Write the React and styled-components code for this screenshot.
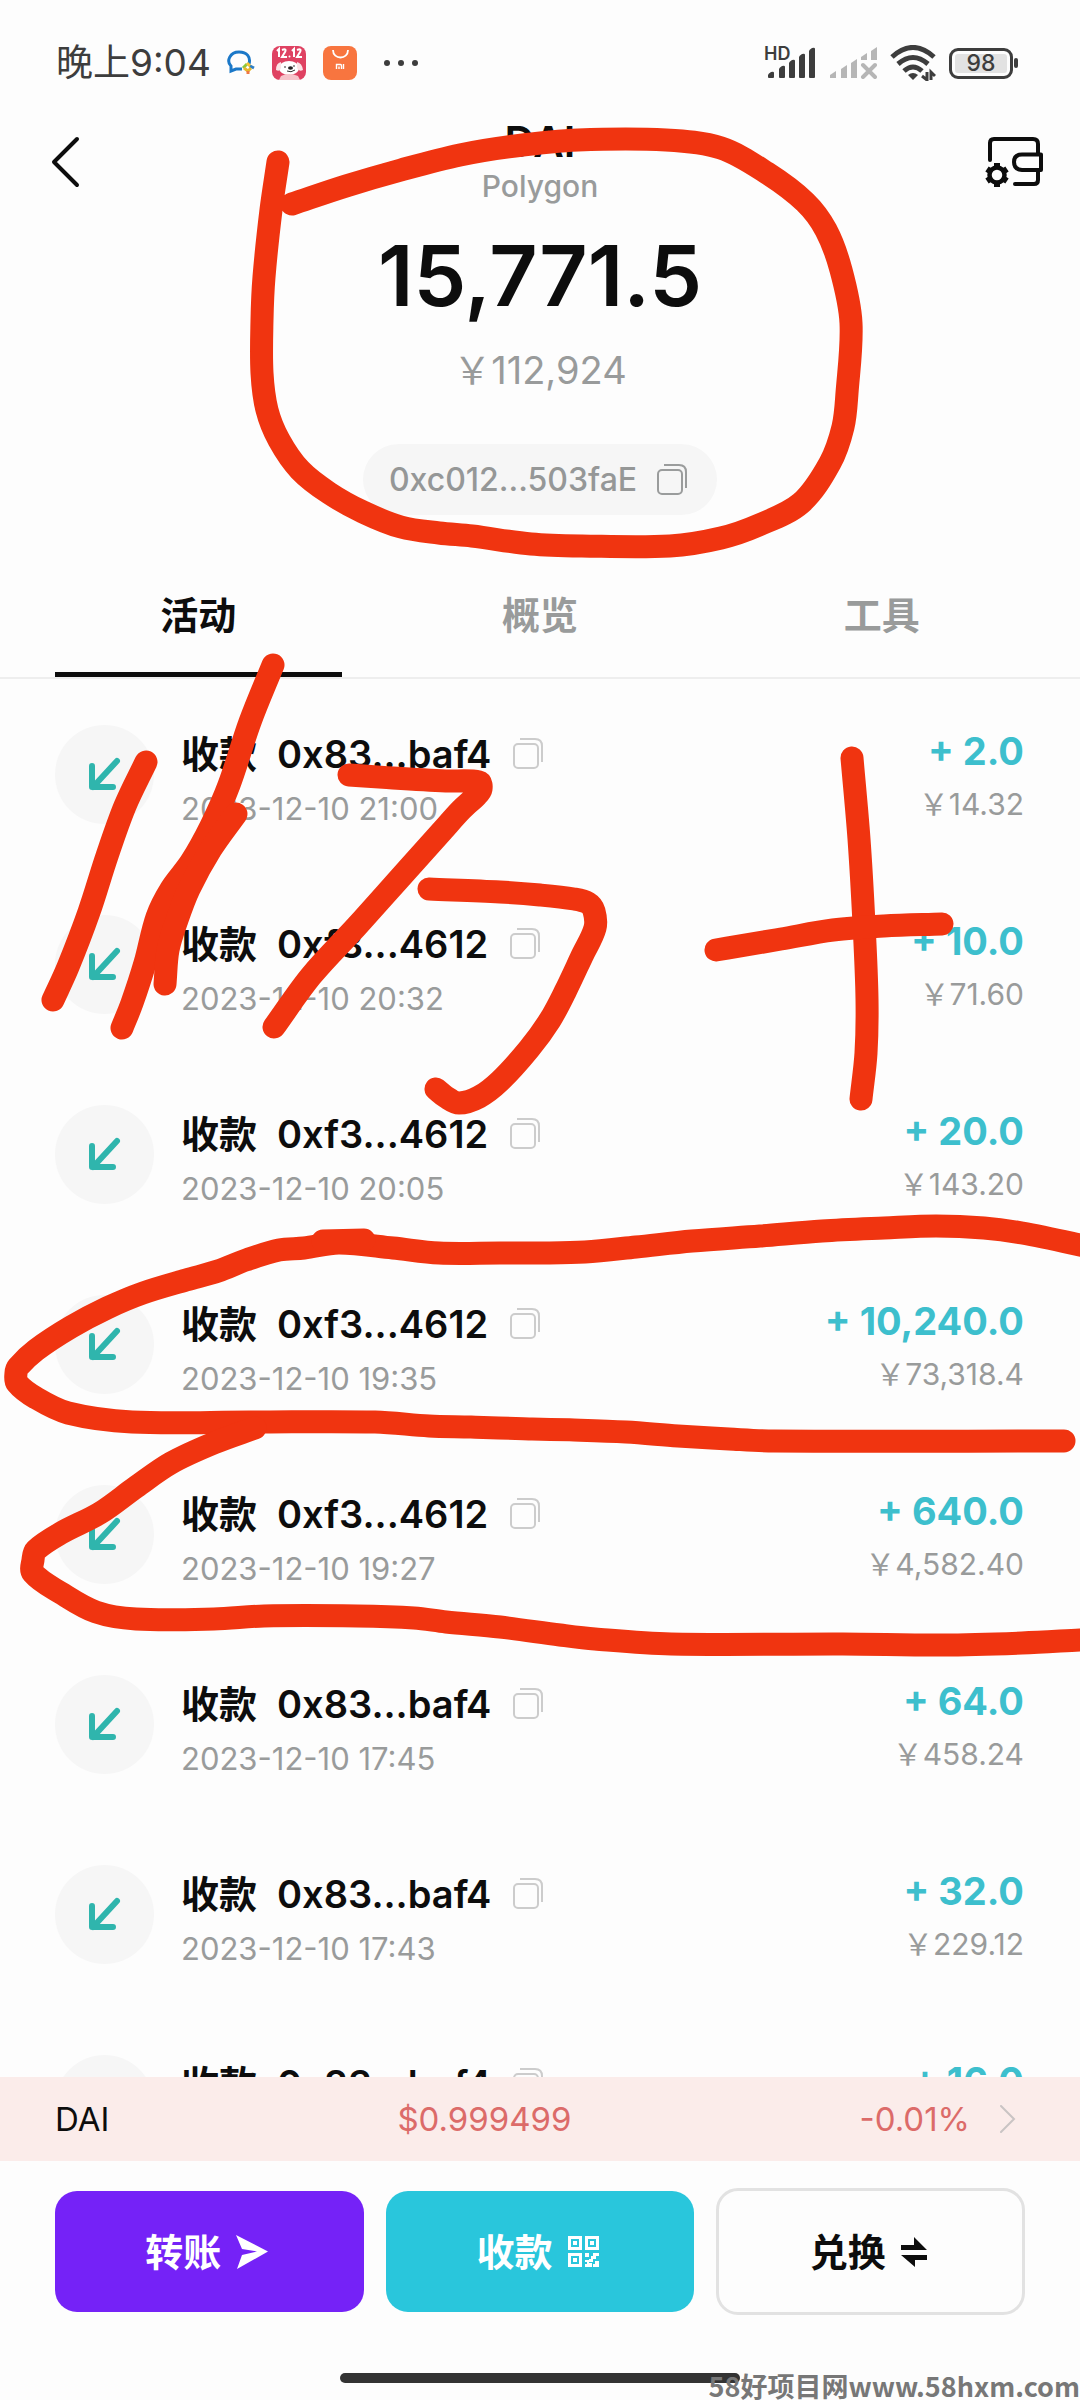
import React from "react";
import styled, { createGlobalStyle } from "styled-components";

const GlobalStyle = createGlobalStyle`
  *, *::before, *::after { box-sizing: border-box; }
  html, body { margin: 0; background: #fdfdfd; }
  body, button {
    font-family: Inter, "Noto Sans CJK SC", "Liberation Sans", sans-serif;
  }
  button { margin: 0; padding: 0; border: 0; background: none; color: inherit; cursor: pointer; }
  svg { display: block; flex: none; }
`;

const Page = styled.div`
  position: relative;
  display: flex;
  flex-direction: column;
  height: 100vh;
  overflow: hidden;
  background: #fdfdfd;
  color: #0d0d0d;
`;

const StatusBar = styled.div`
  display: flex;
  align-items: center;
  justify-content: space-between;
  flex: none;
  height: 118px;
  padding: 8px 62px 0 56px;
  color: #3d3d3d;
`;

const StatusGroup = styled.div`
  display: flex;
  align-items: center;
  gap: ${(p) => p.$gap}px;
`;

const Clock = styled.time`
  font-size: 37px;
  line-height: 44px;
`;

const NotificationIcons = styled.div`
  display: flex;
  align-items: center;
  gap: 17px;
  margin-right: 10px;
`;

const SignalBox = styled.span`
  position: relative;
  display: block;
`;

const HdMark = styled.span`
  position: absolute;
  left: -2px;
  top: -2px;
  font-size: 18px;
  line-height: 18px;
  font-weight: 600;
`;

const BatteryBox = styled.span`
  display: flex;
  align-items: center;
  gap: 1px;
`;

const BatteryLevel = styled.span`
  display: flex;
  align-items: center;
  justify-content: center;
  width: 64px;
  height: 31px;
  border: 3px solid #3d3d3d;
  border-radius: 9px;
  background: #e2e2e2;
  box-shadow: inset 0 0 0 3px #fdfdfd;
  font-size: 23px;
  line-height: 24px;
  font-weight: 500;
`;

const BatteryTip = styled.span`
  width: 4px;
  height: 10px;
  border-radius: 2px;
  background: #3d3d3d;
`;

const Header = styled.header`
  display: flex;
  align-items: center;
  justify-content: space-between;
  flex: none;
  height: 88px;
  padding: 0 36px;
`;

const IconButton = styled.button`
  display: flex;
  align-items: center;
  justify-content: center;
  width: 60px;
  height: 60px;
`;

const HeaderTitle = styled.div`
  text-align: center;
`;

const TokenName = styled.h1`
  margin: 0;
  font-size: 42px;
  line-height: 48px;
  font-weight: 600;
`;

const Network = styled.div`
  font-size: 30px;
  line-height: 40px;
  font-weight: 500;
  color: #999b9b;
`;

const Summary = styled.section`
  display: flex;
  flex-direction: column;
  align-items: center;
  flex: none;
  padding-top: 20px;
`;

const Balance = styled.div`
  font-size: 84px;
  line-height: 100px;
  font-weight: 600;
`;

const BalanceFiat = styled.div`
  margin-top: 20px;
  font-size: 38px;
  line-height: 48px;
  color: #999b9b;
`;

const AddressPill = styled.button`
  display: flex;
  align-items: center;
  gap: 20px;
  height: 71px;
  margin-top: 50px;
  padding: 0 30px 0 26px;
  border-radius: 36px;
  background: #f6f6f6;
  font-size: 32px;
  line-height: 40px;
  font-weight: 500;
  color: #959797;
`;

const Tabs = styled.div`
  display: grid;
  grid-template-columns: repeat(3, 1fr);
  gap: 55px;
  flex: none;
  margin-top: 42px;
  padding: 0 55px;
  border-bottom: 2px solid #eeeeee;
`;

const Tab = styled.button`
  height: 120px;
  border-bottom: 5px solid ${(p) => (p.$active ? "#0d0d0d" : "transparent")};
  font-size: 38px;
  line-height: 48px;
  font-weight: 600;
  color: ${(p) => (p.$active ? "#0d0d0d" : "#999b9b")};
`;

const List = styled.ul`
  flex: 1;
  min-height: 0;
  margin: 0;
  padding: 0;
  overflow: hidden;
  list-style: none;
`;

const Row = styled.li`
  display: flex;
  align-items: center;
  height: 190px;
  padding: 0 56px 0 55px;
`;

const Direction = styled.span`
  display: flex;
  align-items: center;
  justify-content: center;
  flex: none;
  width: 99px;
  height: 99px;
  margin-right: 27px;
  border-radius: 50%;
  background: #f6f6f6;
`;

const Details = styled.div`
  flex: 1;
  padding-top: 9px;
`;

const TitleLine = styled.div`
  display: flex;
  align-items: center;
  font-size: 38px;
  line-height: 60px;
  font-weight: 600;
`;

const Counterparty = styled.span`
  margin: 0 22px 0 20px;
`;

const CopyButton = styled.button`
  display: flex;
`;

const Time = styled.div`
  font-size: 31px;
  line-height: 50px;
  color: #999b9b;
`;

const Fiat = styled.div`
  font-size: 30px;
  line-height: 46px;
  color: #999b9b;
`;

const Amounts = styled.div`
  text-align: right;
`;

const Amount = styled.div`
  font-size: 38px;
  line-height: 60px;
  font-weight: 700;
  color: #3dbfcd;
`;

const Ticker = styled.button`
  display: flex;
  align-items: center;
  justify-content: space-between;
  flex: none;
  height: 84px;
  padding: 0 64px 0 55px;
  background: #fbecea;
  font-size: 33px;
  line-height: 40px;
  color: #0d0d0d;
`;

const TickerValue = styled.span`
  display: flex;
  align-items: center;
  gap: 30px;
  color: #dc6b69;
`;

const Actions = styled.div`
  display: grid;
  grid-template-columns: repeat(3, 1fr);
  align-items: center;
  gap: 22px;
  flex: none;
  padding: 27px 55px 0;
`;

const ActionButton = styled.button`
  display: flex;
  align-items: center;
  justify-content: center;
  gap: 15px;
  height: ${(p) => (p.$outlined ? 127 : 121)}px;
  padding-right: 5px;
  border: ${(p) => (p.$outlined ? "3px solid #e2e2e2" : "0")};
  border-radius: 22px;
  background: ${(p) => p.$bg};
  color: ${(p) => p.$color};
  font-size: 38px;
  line-height: 48px;
  font-weight: 600;
`;

const HomeBar = styled.div`
  align-self: center;
  flex: none;
  width: 37%;
  height: 10px;
  margin: 58px 0 17px;
  border-radius: 5px;
  background: #333333;
`;

const Watermark = styled.div`
  position: absolute;
  right: 0;
  bottom: 0;
  font-family: "Noto Sans CJK SC", sans-serif;
  font-size: 27px;
  line-height: 28px;
  font-weight: 700;
  white-space: nowrap;
  color: #777777;
`;

const Ink = styled.svg`
  position: absolute;
  left: 0;
  top: 0;
  width: 100%;
  pointer-events: none;
`;

function CopyIcon({ color }) {
  return (
    <svg width="30" height="31" viewBox="0 0 30 31" fill="none" stroke={color} strokeWidth="2">
      <rect x="1" y="6" width="24" height="24" rx="4" />
      <path d="M7 1H22Q29 1 29 8V24" />
    </svg>
  );
}

function ChatIcon() {
  return (
    <svg width="28" height="26" viewBox="0 0 28 26" fill="none" strokeWidth="3">
      <path d="M22 14C24 7 20 2 12 2C3 2 -1 11 4 16L4 21L9 19H15" stroke="#1b78c8" />
      <path d="M16 18L20 14" stroke="#8cc63f" />
      <path d="M20 13L24 17" stroke="#f5c331" />
      <path d="M23 16L27 18" stroke="#2f7fc4" />
      <path d="M17 18L21 21L24 18" stroke="#e7b62e" />
      <path d="M21 21L21 24" stroke="#ee7744" />
    </svg>
  );
}

function ShoppingAppIcon() {
  return (
    <svg width="34" height="34" viewBox="0 0 34 34">
      <rect width="34" height="34" rx="8" fill="#df4262" />
      <path d="M5 5L7 3V11M10 4Q15 2 13 6L10 11H15M20 5L22 3V11M25 4Q30 2 28 6L25 11H30" fill="none" stroke="#fff" strokeWidth="2" />
      <circle cx="17.500" cy="10.500" r="1" fill="#fff" />
      <ellipse cx="17" cy="22" rx="10" ry="7" fill="#fff" />
      <path d="M9 16Q4 17 4 24Q8 26 9 22ZM25 16Q30 17 31 24Q27 26 25 22Z" fill="#fbe3e6" />
      <path d="M9 30Q17 26 26 30L28 34H7Z" fill="#f6c4cb" />
      <ellipse cx="18.500" cy="22" rx="2.500" ry="1.800" fill="#222" />
      <path d="M13 20V22M22 19V21M15 25Q19 27 23 24" stroke="#333" strokeWidth="1" fill="none" />
    </svg>
  );
}

function StoreAppIcon() {
  return (
    <svg width="34" height="34" viewBox="0 0 34 34" fill="none" stroke="#fff">
      <rect width="34" height="34" rx="8" fill="#f8753f" stroke="none" />
      <path d="M10 4C10 14 25 14 25 4" strokeWidth="1.800" />
      <path d="M13.500 23V18.500H17.500Q18.500 18.500 18.500 20V23M16 20.500V23M20.500 18V23" strokeWidth="1.400" />
    </svg>
  );
}

function DotsIcon() {
  return (
    <svg width="36" height="8" viewBox="0 0 36 8" fill="#3d3d3d">
      <circle cx="4" cy="4" r="3" />
      <circle cx="18" cy="4" r="3" />
      <circle cx="32" cy="4" r="3" />
    </svg>
  );
}

const BARS = [
  [2, 24],
  [13, 18],
  [23, 12],
  [33, 6],
  [43, 0],
];

function SignalIcon() {
  return (
    <svg width="49" height="32" viewBox="0 0 49 32" fill="#3d3d3d">
      {BARS.map(([x, y]) => (
        <path key={x} d={`M${x} ${y + 4}Q${x} ${y + 3} ${x + 3} ${y + 1}Q${x + 6} ${y} ${x + 6} ${y + 2}V30Q${x + 6} 31 ${x + 5} 31H${x + 1}Q${x} 31 ${x} 30Z`} />
      ))}
    </svg>
  );
}

function NoSignalIcon() {
  return (
    <svg width="49" height="32" viewBox="0 0 49 32" fill="#b6b6b6">
      {BARS.map(([x, y], i) => {
        const base = i < 3 ? 31 : 13;
        return <path key={x} d={`M${x} ${y + 4}L${x + 6} ${y}V${base}H${x}Z`} />;
      })}
      <path d="M35 18L47 30M47 18L35 30" stroke="#b6b6b6" strokeWidth="4" strokeLinecap="round" />
    </svg>
  );
}

function WifiIcon() {
  return (
    <svg width="46" height="36" viewBox="0 0 46 36" fill="none" stroke="#3d3d3d">
      <path d="M2 12Q23 -7 44 12" strokeWidth="5" />
      <path d="M8 19Q23 6 38 19" strokeWidth="5" />
      <path d="M14 26Q23 18 32 26" strokeWidth="5" />
      <path d="M18 30Q23 26 28 30L23 35Z" fill="#3d3d3d" stroke="none" />
      <path d="M37 27V35L32 31M41 35V27L45 31" strokeWidth="3" />
    </svg>
  );
}

function BackIcon() {
  return (
    <svg width="30" height="52" viewBox="0 0 30 52" fill="none" stroke="#0d0d0d" strokeWidth="4" strokeLinecap="round" strokeLinejoin="round">
      <path d="M26 3L3 26L26 49" />
    </svg>
  );
}

function WalletIcon() {
  return (
    <svg width="60" height="52" viewBox="0 0 60 52" fill="none" stroke="#0d0d0d" strokeWidth="4" strokeLinecap="round" strokeLinejoin="round">
      <path d="M6 24V7Q6 3 10 3H49Q54 3 54 8V17M54 36V44Q54 48 50 48H31" />
      <path d="M57 18.500H38Q30 18.500 30 26T38 34H57Z" />
      <circle cx="13" cy="39" r="7.500" strokeWidth="4.500" />
      <path d="M13 31V27M13 47V51M6 35L3 33M20 43L23 45M6 43L3 45M20 35L23 33" strokeWidth="6" strokeLinecap="butt" />
    </svg>
  );
}

function IncomingIcon() {
  return (
    <svg width="32" height="34" viewBox="0 0 32 34" fill="none" stroke="#2fb5ad" strokeWidth="6" strokeLinecap="round" strokeLinejoin="round">
      <path d="M28 4L4 30M3 9V30H24" />
    </svg>
  );
}

function ChevronIcon() {
  return (
    <svg width="16" height="28" viewBox="0 0 16 28" fill="none" stroke="#c9c4c4" strokeWidth="2" strokeLinecap="round">
      <path d="M1 1L14 14L1 27" />
    </svg>
  );
}

function SendIcon() {
  return (
    <svg width="32" height="34" viewBox="0 0 32 34" fill="#fff">
      <path d="M0 0L32 16.500L1 34L6 20L21 16.500L6 14Z" />
    </svg>
  );
}

function QrIcon() {
  return (
    <svg width="31" height="31" viewBox="0 0 31 31" fill="none" stroke="#fff" strokeWidth="3">
      {[[1.5, 1.5], [18.5, 1.5], [1.5, 18.5]].map(([x, y]) => (
        <g key={`${x}-${y}`}>
          <rect x={x} y={y} width="11" height="11" />
          <rect x={x + 3.5} y={y + 3.5} width="4" height="4" fill="#fff" stroke="none" />
        </g>
      ))}
      <path d="M17 17H21V21H17ZM25 17H31V20H28V23H25V26H21V23H23V20H25ZM17 24H21V27H24V31H17V28H19V26H17ZM27 25H31V31H25V28H27Z" fill="#fff" stroke="none" />
    </svg>
  );
}

function SwapIcon() {
  return (
    <svg width="26" height="30" viewBox="0 0 26 30" fill="#0d0d0d">
      <path d="M0 8H13V0L26 13H0ZM26 23H14V30L0 18H26Z" />
    </svg>
  );
}

const STROKES = [
  [[278,162],[271,210],[264,277],[262,320],[262,373],[267,410],[279,440],[300,470],[329,493],[363,512],[401,527],[439,533],[472,536],[531,544],[582,546],[670,546],[721,538],[759,525],[801,503],[830,463],[843,427],[847,393],[851,323],[841,270],[826,230],[805,202],[767,173],[721,148],[666,140],[578,140],[515,146],[460,155],[401,170],[346,186],[292,204]],
  [[146,762],[125,806],[107,856],[89,912],[68,967],[53,1000]],
  [[273,665],[250,722],[229,785],[211,826],[191,862],[171,889],[157,917],[145,963],[132,1003],[122,1028]],
  [[236,814],[211,849],[189,889],[177,920],[168,950],[165,984]],
  [[349,775],[393,778],[446,781],[479,782],[481,789],[477,795],[461,810],[443,830],[400,878],[357,926],[311,976],[274,1027]],
  [[429,889],[500,892],[540,895],[574,899],[588,903],[594,911],[595,928],[582,956],[565,992],[550,1020],[529,1049],[500,1081],[479,1097],[459,1103],[446,1097],[436,1089]],
  [[852,758],[859,839],[864,924],[867,999],[866,1053],[861,1099]],
  [[716,950],[781,939],[833,930],[884,926],[942,924]],
  [[1100,1250],[1080,1245],[1022,1233],[984,1228],[936,1226],[884,1228],[822,1231],[760,1236],[692,1241],[636,1247],[585,1252],[540,1253],[500,1253],[439,1253],[393,1248],[339,1243],[304,1248],[279,1250],[246,1260],[218,1271],[186,1280],[143,1293],[107,1308],[71,1327],[36,1350],[18,1367],[16,1373],[17,1383],[36,1398],[68,1413],[132,1422],[250,1422],[375,1422],[429,1426],[471,1427],[529,1429],[574,1430],[626,1432],[678,1436],[729,1439],[774,1441],[1064,1441]],
  [[323,1241],[364,1240]],
  [[255,1428],[214,1443],[171,1463],[136,1487],[100,1513],[61,1533],[36,1550],[33,1560],[33,1573],[61,1593],[96,1612],[136,1619],[214,1619],[264,1616],[357,1616],[414,1618],[446,1622],[500,1627],[560,1635],[595,1639],[671,1644],[843,1644],[943,1645],[1022,1643],[1080,1640],[1100,1639]],
];

// Catmull-Rom interpolation: the curve passes through every point.
function smooth(points) {
  const last = points.length - 1;
  let d = `M${points[0][0]} ${points[0][1]}`;
  for (let i = 0; i < last; i += 1) {
    const p0 = points[Math.max(i - 1, 0)];
    const p1 = points[i];
    const p2 = points[i + 1];
    const p3 = points[Math.min(i + 2, last)];
    const reach = Math.hypot(p2[0] - p1[0], p2[1] - p1[1]) / 3;
    const a = Math.hypot(p2[0] - p0[0], p2[1] - p0[1]) || 1;
    const b = Math.hypot(p3[0] - p1[0], p3[1] - p1[1]) || 1;
    const c1x = p1[0] + ((p2[0] - p0[0]) / a) * reach;
    const c1y = p1[1] + ((p2[1] - p0[1]) / a) * reach;
    const c2x = p2[0] - ((p3[0] - p1[0]) / b) * reach;
    const c2y = p2[1] - ((p3[1] - p1[1]) / b) * reach;
    d += `C${c1x} ${c1y} ${c2x} ${c2y} ${p2[0]} ${p2[1]}`;
  }
  return d;
}

const TABS = ["活动", "概览", "工具"];

const TRANSACTIONS = [
  { peer: "0x83...baf4", time: "2023-12-10 21:00", amount: "2.0", fiat: "14.32" },
  { peer: "0xf3...4612", time: "2023-12-10 20:32", amount: "10.0", fiat: "71.60" },
  { peer: "0xf3...4612", time: "2023-12-10 20:05", amount: "20.0", fiat: "143.20" },
  { peer: "0xf3...4612", time: "2023-12-10 19:35", amount: "10,240.0", fiat: "73,318.4" },
  { peer: "0xf3...4612", time: "2023-12-10 19:27", amount: "640.0", fiat: "4,582.40" },
  { peer: "0x83...baf4", time: "2023-12-10 17:45", amount: "64.0", fiat: "458.24" },
  { peer: "0x83...baf4", time: "2023-12-10 17:43", amount: "32.0", fiat: "229.12" },
  { peer: "0x83...baf4", time: "", amount: "16.0", fiat: "" },
];

export default function App() {
  const [tab, setTab] = React.useState(0);
  return (
    <Page>
      <GlobalStyle />
      <StatusBar>
        <StatusGroup $gap={16}>
          <Clock>晚上9:04</Clock>
          <NotificationIcons>
            <ChatIcon />
            <ShoppingAppIcon />
            <StoreAppIcon />
          </NotificationIcons>
          <DotsIcon />
        </StatusGroup>
        <StatusGroup $gap={13}>
          <SignalBox>
            <HdMark>HD</HdMark>
            <SignalIcon />
          </SignalBox>
          <NoSignalIcon />
          <WifiIcon />
          <BatteryBox>
            <BatteryLevel>98</BatteryLevel>
            <BatteryTip />
          </BatteryBox>
        </StatusGroup>
      </StatusBar>

      <Header>
        <IconButton aria-label="返回">
          <BackIcon />
        </IconButton>
        <HeaderTitle>
          <TokenName>DAI</TokenName>
          <Network>Polygon</Network>
        </HeaderTitle>
        <IconButton aria-label="钱包设置">
          <WalletIcon />
        </IconButton>
      </Header>

      <Summary>
        <Balance>15,771.5</Balance>
        <BalanceFiat>￥112,924</BalanceFiat>
        <AddressPill>
          0xc012...503faE
          <CopyIcon color="#9a9c9c" />
        </AddressPill>
      </Summary>

      <Tabs role="tablist">
        {TABS.map((name, i) => (
          <Tab key={name} role="tab" aria-selected={tab === i} $active={tab === i} onClick={() => setTab(i)}>
            {name}
          </Tab>
        ))}
      </Tabs>

      <List>
        {TRANSACTIONS.map((t) => (
          <Row key={t.amount}>
            <Direction>
              <IncomingIcon />
            </Direction>
            <Details>
              <TitleLine>
                收款
                <Counterparty>{t.peer}</Counterparty>
                <CopyButton aria-label="复制地址">
                  <CopyIcon color="#cccccc" />
                </CopyButton>
              </TitleLine>
              <Time>{t.time || "\u00a0"}</Time>
            </Details>
            <Amounts>
              <Amount>+ {t.amount}</Amount>
              <Fiat>{t.fiat ? `￥${t.fiat}` : "\u00a0"}</Fiat>
            </Amounts>
          </Row>
        ))}
      </List>

      <Ticker>
        <span>DAI</span>
        <TickerValue>$0.999499</TickerValue>
        <TickerValue>
          -0.01%
          <ChevronIcon />
        </TickerValue>
      </Ticker>

      <Actions>
        <ActionButton $bg="#7522f7" $color="#ffffff">
          转账
          <SendIcon />
        </ActionButton>
        <ActionButton $bg="#29c6dc" $color="#ffffff">
          收款
          <QrIcon />
        </ActionButton>
        <ActionButton $bg="#fdfdfd" $color="#0d0d0d" $outlined>
          兑换
          <SwapIcon />
        </ActionButton>
      </Actions>
      <HomeBar />

      <Ink viewBox="0 0 1080 2400" fill="none" stroke="#f03410" strokeWidth="23" strokeLinecap="round" strokeLinejoin="round" aria-hidden="true">
        {STROKES.map((points, i) => (
          <path key={i} d={smooth(points)} />
        ))}
      </Ink>
      <Watermark>58好项目网www.58hxm.com</Watermark>
    </Page>
  );
}
